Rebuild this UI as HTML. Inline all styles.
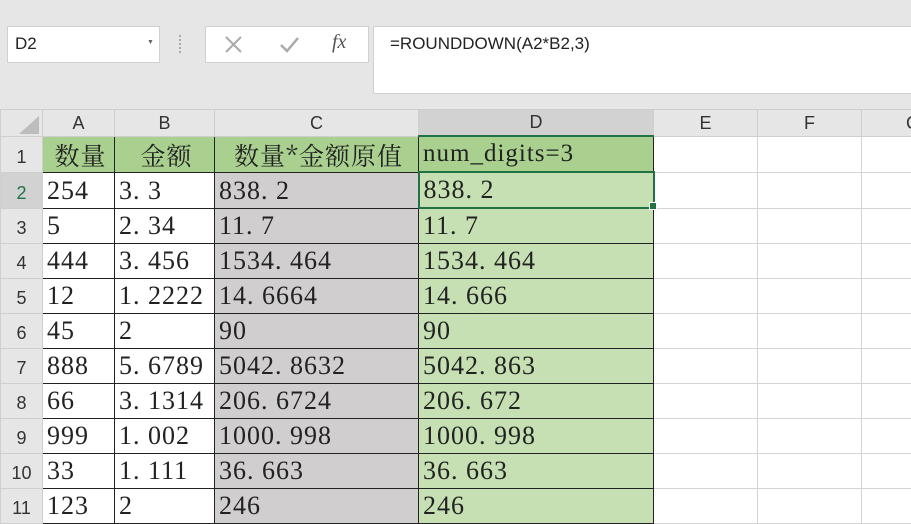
<!DOCTYPE html>
<html><head><meta charset="utf-8"><style>
body{margin:0;width:911px;height:509px;overflow:hidden;background:#e6e6e6;position:relative;font-family:"Liberation Sans","Noto Sans CJK SC",sans-serif}
.box{position:absolute;background:#fff;border:1px solid #d0d0d0}
table{position:absolute;left:0;top:109px;border-collapse:collapse;table-layout:fixed;width:911px}
td{padding:0 0 0 4px;height:34px;border:1px solid #d4d4d4;background:#fff;font-family:"Liberation Serif","Noto Serif CJK SC",serif;font-size:26px;letter-spacing:1px;color:#222;white-space:nowrap;overflow:hidden;line-height:34px;vertical-align:bottom}
tr.h td{height:25px;background:#e6e6e6;border-color:#cfcfcf;text-align:center;font-family:"Liberation Sans",sans-serif;font-size:18px;letter-spacing:0;line-height:25px;padding:0;color:#333}
td.rh{background:#e6e6e6;border-color:#cfcfcf;font-family:"Liberation Sans",sans-serif;font-size:18px;letter-spacing:0;color:#333;text-align:center;padding:0;line-height:30px}
td.k{border-color:#222}
td.g{background:#a9d08e;font-family:"Noto Serif CJK SC",serif;font-size:25px;letter-spacing:1px;text-align:center}
td.gray{background:#d0cece}
td.lg{background:#c6e0b4}
</style></head><body>
<div class="box" style="left:7px;top:26px;width:151px;height:35px"><span style="position:absolute;left:7px;top:7px;font-size:17px;color:#222">D2</span><span style="position:absolute;left:139px;top:12px;font-size:7px;color:#666">▼</span></div>
<div style="position:absolute;left:179px;top:35px;width:2px;height:18px;border-left:2px dotted #aaa"></div>
<div class="box" style="left:205px;top:26px;width:162px;height:35px">
<svg width="162" height="35" style="position:absolute;left:0;top:0"><path d="M20 10 L35 25 M35 10 L20 25" stroke="#aaa" stroke-width="2" fill="none"/><path d="M75 18 L81 24 L92 11" stroke="#aaa" stroke-width="2.5" fill="none"/></svg>
<span style="position:absolute;left:126px;top:4px;font-family:'Liberation Serif',serif;font-style:italic;font-size:20px;color:#555">fx</span></div>
<div class="box" style="left:373px;top:26px;width:540px;height:66px"><span style="position:absolute;left:16px;top:7px;font-size:17px;color:#222">=ROUNDDOWN(A2*B2,3)</span></div>
<table>
<colgroup><col style="width:42px"><col style="width:72px"><col style="width:100px"><col style="width:204px"><col style="width:235px"><col style="width:104px"><col style="width:104px"><col style="width:50px"></colgroup>
<tr class="h"><td><svg width="26" height="22" style="display:block;margin:2px 0 0 14px"><path d="M24 2 L24 20 L4 20 Z" fill="#bdbdbd"/></svg></td><td>A</td><td>B</td><td>C</td><td style="background:#d2d2d2;border-bottom:2px solid #217346">D</td><td>E</td><td>F</td><td style="text-align:left;padding-left:44px">G</td></tr>
<tr><td class="rh">1</td><td class="k g">数量</td><td class="k g">金额</td><td class="k g">数量*金额原值</td><td class="k g" style="text-align:left;font-family:'Liberation Serif',serif;padding-left:4px">num_digits=3</td><td></td><td></td><td></td></tr>
<tr><td class="rh" style="background:#d2d2d2;color:#217346">2</td><td class="k">254</td><td class="k">3. 3</td><td class="k gray">838. 2</td><td class="k lg" style="border:2px solid #217346">838. 2</td><td></td><td></td><td></td></tr>
<tr><td class="rh">3</td><td class="k">5</td><td class="k">2. 34</td><td class="k gray">11. 7</td><td class="k lg">11. 7</td><td></td><td></td><td></td></tr>
<tr><td class="rh">4</td><td class="k">444</td><td class="k">3. 456</td><td class="k gray">1534. 464</td><td class="k lg">1534. 464</td><td></td><td></td><td></td></tr>
<tr><td class="rh">5</td><td class="k">12</td><td class="k">1. 2222</td><td class="k gray">14. 6664</td><td class="k lg">14. 666</td><td></td><td></td><td></td></tr>
<tr><td class="rh">6</td><td class="k">45</td><td class="k">2</td><td class="k gray">90</td><td class="k lg">90</td><td></td><td></td><td></td></tr>
<tr><td class="rh">7</td><td class="k">888</td><td class="k">5. 6789</td><td class="k gray">5042. 8632</td><td class="k lg">5042. 863</td><td></td><td></td><td></td></tr>
<tr><td class="rh">8</td><td class="k">66</td><td class="k">3. 1314</td><td class="k gray">206. 6724</td><td class="k lg">206. 672</td><td></td><td></td><td></td></tr>
<tr><td class="rh">9</td><td class="k">999</td><td class="k">1. 002</td><td class="k gray">1000. 998</td><td class="k lg">1000. 998</td><td></td><td></td><td></td></tr>
<tr><td class="rh">10</td><td class="k">33</td><td class="k">1. 111</td><td class="k gray">36. 663</td><td class="k lg">36. 663</td><td></td><td></td><td></td></tr>
<tr><td class="rh">11</td><td class="k">123</td><td class="k">2</td><td class="k gray">246</td><td class="k lg">246</td><td></td><td></td><td></td></tr>
</table>
<div style="position:absolute;left:649px;top:202px;width:6px;height:6px;background:#217346;border:1px solid #fff"></div>
</body></html>
